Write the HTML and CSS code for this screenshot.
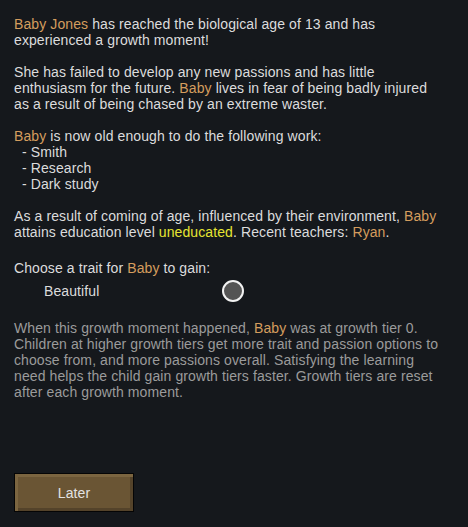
FILE: index.html
```html
<!DOCTYPE html>
<html>
<head>
<meta charset="utf-8">
<link rel="stylesheet" href="styles.css">
</head>
<body>
<div class="dialog">
  <div class="text">
    <p><span class="name">Baby Jones</span> has reached the biological age of 13 and has experienced a growth moment!</p>
    <p>She has failed to develop any new passions and has little enthusiasm for the future. <span class="name">Baby</span> lives in fear of being badly injured as a result of being chased by an extreme waster.</p>
    <p><span class="name">Baby</span> is now old enough to do the following work:<br>&nbsp; - Smith<br>&nbsp; - Research<br>&nbsp; - Dark study</p>
    <p>As a result of coming of age, influenced by their environment, <span class="name">Baby</span> attains education level <span class="edu">uneducated</span>. Recent teachers: <span class="name">Ryan</span>.</p>
    <p class="choose">Choose a trait for <span class="name">Baby</span> to gain:</p>
    <div class="option">
      <span class="option-label">Beautiful</span>
      <span class="radio"></span>
    </div>
    <p class="note">When this growth moment happened, <span class="name">Baby</span> was at growth tier 0. Children at higher growth tiers get more trait and passion options to choose from, and more passions overall. Satisfying the learning need helps the child gain growth tiers faster. Growth tiers are reset after each growth moment.</p>
  </div>
  <div class="actions">
    <button class="btn">Later</button>
  </div>
</div>
</body>
</html>
```

FILE: styles.css
```css
html, body {
  margin: 0;
  padding: 0;
  background: #15181c;
  width: 468px;
  height: 527px;
  overflow: hidden;
}
.dialog {
  box-sizing: border-box;
  height: 527px;
  padding: 16px 14px 15px 14px;
  display: flex;
  flex-direction: column;
  font-family: "Liberation Sans", Arial, sans-serif;
  font-size: 14px;
  line-height: 16px;
  letter-spacing: 0.1px;
  color: #dcdcdc;
}
.text {
  width: 428px;
  flex: 1;
}
.text p {
  margin: 0 0 16px 0;
}
.name { color: #d49d5e; }
.edu { color: #e6e532; }
.text p.choose {
  margin-top: 20px;
  margin-bottom: 3px;
}
.option {
  display: flex;
  align-items: center;
  height: 24px;
  padding-left: 30px;
  margin-bottom: 17px;
}
.option-label {
  width: 178px;
}
.radio {
  box-sizing: border-box;
  width: 22px;
  height: 22px;
  border-radius: 50%;
  border: 2px solid #f2f2f2;
  background: #545454;
}
.text p.note {
  color: #9b9b9b;
  margin: 0;
}
.actions {
  display: flex;
}
.btn {
  box-sizing: border-box;
  width: 120px;
  height: 39px;
  border: 1px solid #050505;
  background: #6a5534;
  box-shadow: inset 3px 3px 0 #7b6540, inset -3px -3px 0 #54432a;
  color: #e2e2e2;
  font-family: "Liberation Sans", Arial, sans-serif;
  font-size: 14px;
  letter-spacing: 0.1px;
  padding: 0;
  cursor: pointer;
}
```
